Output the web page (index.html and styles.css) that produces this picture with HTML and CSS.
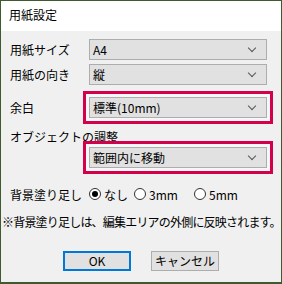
FILE: index.html
```html
<!DOCTYPE html>
<html lang="ja">
<head>
    <meta charset="UTF-8">
    <title>用紙設定</title>
    <link rel="stylesheet" href="styles.css">
</head>
<body>
    <div class="window">
        <div class="titlebar">用紙設定</div>
        <div class="content">
            <div class="row first">
                <span class="label">用紙サイズ</span>
                <div class="select"><span>A4</span><span class="chevron"></span></div>
            </div>
            <div class="row second">
                <span class="label">用紙の向き</span>
                <div class="select"><span>縦</span><span class="chevron"></span></div>
            </div>
            <div class="row third">
                <span class="label">余白</span>
                <div class="select focused"><span>標準(10mm)</span><span class="chevron"></span></div>
            </div>
            <div class="group-label">オブジェクトの調整</div>
            <div class="row fourth">
                <span class="label"></span>
                <div class="select focused"><span>範囲内に移動</span><span class="chevron"></span></div>
            </div>
            <div class="row radios">
                <span class="label">背景塗り足し</span>
                <label class="radio r1"><span class="dot checked"></span>なし</label>
                <label class="radio r2"><span class="dot"></span>3mm</label>
                <label class="radio r3"><span class="dot"></span>5mm</label>
            </div>
            <div class="note">※背景塗り足しは、編集エリアの外側に反映されます。</div>
            <div class="buttons">
                <button class="btn default">OK</button>
                <button class="btn">キャンセル</button>
            </div>
        </div>
    </div>
</body>
</html>
```

FILE: styles.css
```css
html, body {
    margin: 0;
    padding: 0;
}
body {
    background-color: #3d5a2c;
    font-family: "Noto Sans CJK JP", "Noto Sans", sans-serif;
    font-size: 12px;
    color: #000;
    width: 282px;
    height: 284px;
    overflow: hidden;
}
.window {
    width: 280px;
    height: 281px;
    border: 1px solid #3f5a2e;
    background-color: #f0f0f0;
}
.titlebar {
    height: 30px;
    background-color: #fff;
    line-height: 28px;
    padding-left: 8px;
}
.content {
    padding-top: 8px;
}
.row {
    display: flex;
    align-items: center;
    height: 21px;
}
.second {
    margin-top: 4px;
}
.third {
    margin-top: 12px;
}
.label {
    width: 79px;
    padding-left: 9px;
    flex-shrink: 0;
    box-sizing: border-box;
    width: 88px;
}
.select {
    width: 173px;
    height: 19px;
    border: 1px solid #adadad;
    background-color: #e1e1e1;
    display: flex;
    align-items: center;
    justify-content: space-between;
    padding-left: 3px;
    box-sizing: content-box;
    line-height: 19px;
}
.select.focused {
    box-shadow: 0 0 0 3px #f7f7f7, 0 0 0 6px #d3004c;
}
.chevron {
    width: 5px;
    height: 5px;
    border-right: 1px solid #555;
    border-bottom: 1px solid #555;
    transform: rotate(45deg);
    margin-right: 11px;
    margin-top: -4px;
}
.group-label {
    margin-top: 11px;
    padding-left: 9px;
    height: 16px;
    line-height: 16px;
}
.fourth {
    margin-top: 2px;
}
.radios {
    margin-top: 18px;
    height: 16px;
}
.radio {
    display: flex;
    align-items: center;
}
.r1 {
    width: 45px;
}
.r2 {
    width: 60px;
}
.dot {
    width: 10px;
    height: 10px;
    border: 1px solid #333;
    border-radius: 50%;
    background-color: #fff;
    margin-right: 3px;
    position: relative;
}
.dot.checked::after {
    content: "";
    position: absolute;
    left: 2px;
    top: 2px;
    width: 6px;
    height: 6px;
    border-radius: 50%;
    background-color: #000;
}
.note {
    margin-top: 12px;
    padding-left: 1px;
    height: 16px;
    line-height: 16px;
    letter-spacing: -0.8px;
    white-space: nowrap;
}
.buttons {
    margin-top: 21px;
    display: flex;
    padding-left: 62px;
    gap: 20px;
}
.btn {
    width: 68px;
    height: 20px;
    font-family: "Noto Sans CJK JP", "Noto Sans", sans-serif;
    font-size: 12px;
    line-height: 16px;
    padding: 0;
    background-color: #e1e1e1;
    border: 1px solid #adadad;
    border-radius: 0;
}
.btn.default {
    border: 2px solid #0078d7;
}
```
